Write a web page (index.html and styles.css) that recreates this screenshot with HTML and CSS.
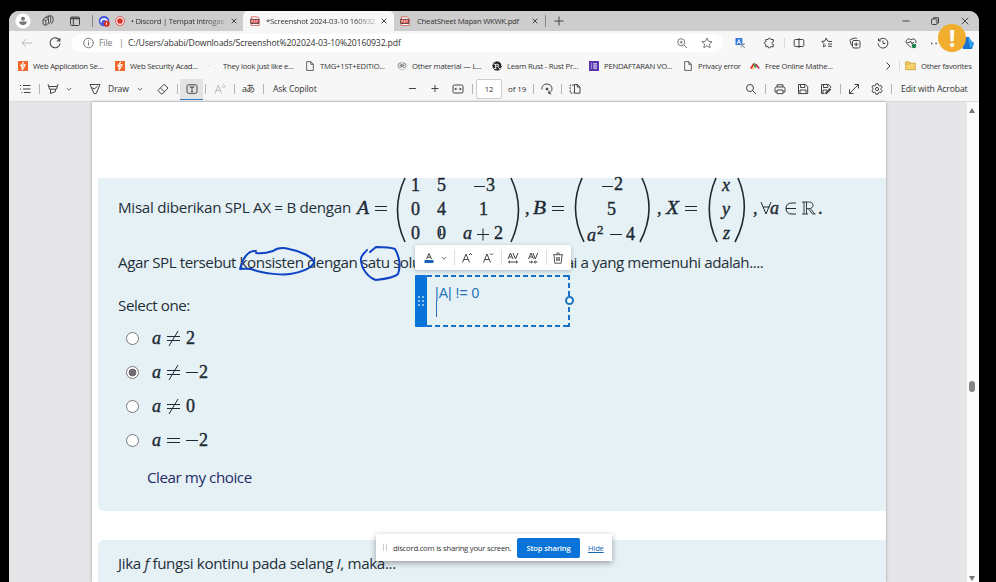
FILE: index.html
```html
<!DOCTYPE html>
<html lang="id">
<head>
<meta charset="utf-8">
<title>Screenshot 2024-03-10 160932.pdf</title>
<link rel="stylesheet" href="styles.css">
</head>
<body>
<svg class="defs">
  <symbol id="pdf" viewBox="0 0 12 12"><path d="M1.5 1h7L11 3v8.5H1.5z" fill="#fff" stroke="#d9534b"/><path d="M0.8 4h9.8v5H.8z" fill="#e03a32"/><path d="M2.2 7.8V5.3h1v1.2h-1M5 5.3v2.4h1V5.3zM8 8V5.3h1.4M8 6.5h1" fill="none" stroke="#fff" stroke-width=".7"/></symbol>
  <symbol id="chev" viewBox="0 0 6 6"><path d="M.8 2L3 4.2 5.2 2" stroke-width=".8"/></symbol>
  <symbol id="doc" viewBox="0 0 12 12"><path d="M2 .8h5l3 3v7.5H2zM7 1v3h3"/></symbol>
  <symbol id="bolt" viewBox="0 0 12 12"><path d="M0 0h12v12H0z" fill="#f2682c" stroke="none"/><path d="M7 1L3.5 5.5h2.3L4 8M6 4.5h2.5L5 11V7" stroke="#fff" stroke-width="1.3"/></symbol>
</svg>
<div class="window">
  <header class="row tabs">
    <svg class="avatar" viewBox="0 0 16 16"><circle cx="8" cy="8" r="7.6" fill="#fff" stroke="none"/><circle cx="8" cy="5.7" r="2" fill="#777" stroke="none"/><path d="M4.3 8.6h7.4c.3 2-1.2 3.6-3.7 3.6s-4-1.6-3.7-3.6z" fill="#777" stroke="none"/></svg>
    <svg viewBox="0 0 12 12"><path d="M1 4.5l3-2.500 2.500 1v5L4 10.500 1 9zM3.500 2.700L6 .8l2.700 1v5.200L6.500 8.800M6 1.800L8.500.3 11 2v5L8.800 9M1 4.500l2.800 1v5M3.800 5.500L6.500 3.200" stroke-width=".9"/></svg>
    <svg viewBox="0 0 12 12"><rect x="1.5" y="2" width="9" height="8.5" rx="1.2"/><path d="M1.5 3.3h9" stroke-width="1.8"/><path d="M4.3 3v7"/></svg>
    <i class="div"></i>
    <div class="tab t1">
      <svg viewBox="0 0 12 12"><circle cx="6" cy="6" r="5.3" fill="#4b5be0" stroke="none"/><path d="M3 7.5c0-3 1-3.500 3-3.500s3 .8 3 3" stroke="#fff" stroke-width="1.4"/><circle cx="8.7" cy="8.7" r="3" fill="#d92d20" stroke="none"/><path d="M8.5 7.5v2.4" stroke="#fff"/></svg>
      <svg class="s10" viewBox="0 0 12 12"><circle cx="6" cy="6" r="5.3" stroke="#d8392c" fill="#fff"/><circle cx="6" cy="6" r="3.4" fill="#d8392c" stroke="none"/></svg>
      <span class="title fade">• Discord | Tempat introgas</span>
      <svg class="s8" viewBox="0 0 8 8"><path d="M1.700 1.700l4.600 4.600M6.300 1.700L1.700 6.300"/></svg>
    </div>
    <div class="tab t2">
      <svg class="s10"><use href="#pdf"/></svg>
      <span class="title fade">*Screenshot 2024-03-10 160932.</span>
      <svg class="s8" viewBox="0 0 8 8"><path d="M1.700 1.700l4.600 4.600M6.300 1.700L1.700 6.300"/></svg>
    </div>
    <div class="tab t3">
      <svg class="s10"><use href="#pdf"/></svg>
      <span class="title">CheatSheet Mapan WKWK.pdf</span>
      <svg class="s8" viewBox="0 0 8 8"><path d="M1.700 1.700l4.600 4.600M6.300 1.700L1.700 6.300"/></svg>
    </div>
    <i class="div"></i>
    <svg viewBox="0 0 12 12"><path d="M6 1.5v9M1.500 6h9"/></svg>
    <svg viewBox="0 0 12 12"><path d="M2.500 6h7"/></svg>
    <svg viewBox="0 0 12 12"><rect x="2.5" y="4" width="5.5" height="5.5" rx="1"/><path d="M4.500 4V2.700h5V8H8.200"/></svg>
    <svg viewBox="0 0 12 12"><path d="M2.700 2.700l6.600 6.600M9.300 2.700L2.700 9.300"/></svg>
  </header>

  <div class="row address">
    <svg class="pale" viewBox="0 0 12 12"><path d="M11 6H1.300M5 2L1.200 6 5 10"/></svg>
    <svg viewBox="0 0 12 12"><path d="M10.500 3.500A5 5 0 1 0 11 6.500M10.800 1v3H7.700" stroke-width="1.1"/></svg>
    <div class="bar">
      <svg class="gray" viewBox="0 0 12 12"><circle cx="5.5" cy="6" r="4.8"/><path d="M5.500 5.200v3.300M5.500 3.300v1"/></svg>
      <span class="gray">File</span>
      <span class="gray">|</span>
      <span class="url">C:/Users/ababi/Downloads/Screenshot%202024-03-10%20160932.pdf</span>
      <svg class="gray" viewBox="0 0 12 12"><circle cx="5.2" cy="5.2" r="3.5"/><path d="M8 8l3 3M5.200 3.700v3M3.700 5.200h3"/></svg>
      <svg class="gray" viewBox="0 0 12 12"><path d="M6 1l1.500 3.300 3.600.4-2.700 2.400.8 3.600L6 8.900l-3.200 1.800.8-3.600L.9 4.700l3.600-.4z"/></svg>
    </div>
    <svg viewBox="0 0 12 12"><path d="M1.500 1h6.800v7H1.500z" fill="#2f77d8" stroke="none"/><path d="M3 7l2-4.500L6.700 7M3.800 5.600h2.300" stroke="#fff" stroke-width=".9"/><path d="M7 10.500l3-3.500M7.500 7.500c1 2 2 2.500 3.500 3M6.500 7h4.500" stroke="#7b8791"/></svg>
    <svg viewBox="0 0 12 12"><path d="M3.800 2.500h1.400c0-2 2.600-2 2.600 0h2.500v2.400c-2-.3-2 2.500 0 2.300v2.500H7.600c0 1.700-2.400 1.700-2.400 0H2.800V7.400C.8 7.400.8 5 2.800 5V2.500z"/></svg>
    <i class="div soft"></i>
    <svg viewBox="0 0 12 12"><rect x="1.2" y="2.5" width="9.6" height="7" rx="1.2"/><path d="M6 1v10"/></svg>
    <svg viewBox="0 0 12 12"><path d="M8 4.200l-1.400-.2L5.200 1 3.800 4l-3 .4 2.200 2.200-.6 3.300L5 8.400M7.800 4.500H11M7 7h4M7 9.300h4"/></svg>
    <svg viewBox="0 0 12 12"><rect x="3.5" y="3.5" width="7.5" height="7.5" rx="1.5"/><path d="M2.500 8.500L1 3.500q0-1 1-1.300l4.500-1.200q1 0 1.300 1M7.200 5.300v4M5.200 7.300h4"/></svg>
    <svg viewBox="0 0 12 12"><path d="M1.500 1.500V4H4M1.600 4A4.900 4.900 0 1 1 1.100 6.500M6 3.500v3h2.500"/></svg>
    <svg viewBox="0 0 12 12"><path d="M6 10.500L1.500 6C-.3 3.500 3.500.2 6 3c2.500-2.800 6.200.5 4.600 3M2.500 5.500h2l1-1.500 1.500 3 1-1.500h1"/><circle cx="9" cy="9" r="2.3" fill="#16824d" stroke="none"/></svg>
    <svg viewBox="0 0 12 12"><path d="M-1 6.500h1.300M3.500 6.500h1.300M8 6.500h1.300" stroke-width="1.400"/></svg>
    <svg class="copilot" viewBox="0 0 14 14"><path d="M5 1h4l2 4 3 2-2 6H3L1 8z" fill="#1673d2" stroke="none"/><path d="M8 2l4 3 1 5-3 2z" fill="#31a6ee" stroke="none"/></svg>
  </div>

  <div class="row bookmarks">
    <a><svg class="s10"><use href="#bolt"/></svg><span>Web Application Se...</span></a>
    <a><svg class="s10"><use href="#bolt"/></svg><span>Web Security Acad...</span></a>
    <a><svg class="s10" viewBox="0 0 12 12"><path d="M1 6h2M6 2l1 1M8 8l1 1" stroke="#cfd3f2"/></svg><span>They look just like e...</span></a>
    <a><svg class="s10"><use href="#doc"/></svg><span>TMG+1ST+EDITIO...</span></a>
    <a><svg class="s10" viewBox="0 0 12 12"><circle cx="3.5" cy="5.500" r="2.300" stroke="#777"/><circle cx="8.5" cy="5.500" r="2.300" stroke="#777"/><circle cx="4" cy="5.500" r=".4"/><circle cx="8" cy="5.500" r=".4"/><path d="M1 8q5 5 10 0M1 3.500q5-4 10 0" stroke="#aaa" stroke-width=".8"/></svg><span>Other material — L...</span></a>
    <a><svg class="s10" viewBox="0 0 12 12"><circle cx="6" cy="6" r="5" fill="#222" stroke="#222" stroke-dasharray="1 .7" stroke-width="1.5"/><path d="M2 4h5.500q1.500 1 0 2.300H4M4.300 4v5M2 9h3.500M7 6.300L8.500 9H10" stroke="#fff"/></svg><span>Learn Rust - Rust Pr...</span></a>
    <a><svg class="s10" viewBox="0 0 12 12"><path d="M0 0h12v12H0z" fill="#5b35b0" stroke="none"/><path d="M2.500 3.500h1M5 3.500h4.500M2.500 6h1M5 6h4.500M2.500 8.500h1M5 8.500h4.500" stroke="#fff" stroke-width="1.200"/></svg><span>PENDAFTARAN VO...</span></a>
    <a><svg class="s10"><use href="#doc"/></svg><span>Privacy error</span></a>
    <a><svg class="s10" viewBox="0 0 12 12"><path d="M1 9l4-6" stroke="#e5322d" stroke-width="2.500"/><path d="M5 3l2 5" stroke="#3b9b45" stroke-width="2.500"/><path d="M7 4l4 5" stroke="#c62d4c" stroke-width="2"/><path d="M3 9h2" stroke="#f2b632" stroke-width="2"/></svg><span>Free Online Mathe...</span></a>
    <svg class="s8" viewBox="0 0 8 8"><path d="M2.500.5L6 4 2.500 7.500"/></svg>
    <i class="div soft"></i>
    <a><svg class="s11" viewBox="0 0 12 12"><path d="M.7 2h4l1.200 1.500h5.400v7H.7z" fill="#f7d36b" stroke="#c39a2b" stroke-width=".8"/><path d="M1 4.500h4l1-1" stroke="#c39a2b" stroke-width=".7"/></svg><span>Other favorites</span></a>
  </div>

  <div class="row pdfbar">
    <svg viewBox="0 0 12 12"><path d="M1 2.500h1M4 2.500h7.500M1 6h1M4 6h7.500M2.500 9.500h1M5 9.500h6.500"/></svg>
    <i class="div"></i>
    <svg viewBox="0 0 12 12"><path d="M1 1.200l1.500 5h7l1.500-5M2 3.500h8M3.500 6.200v4.300l5-2V6.200"/></svg>
    <svg class="s6"><use href="#chev"/></svg>
    <svg viewBox="0 0 12 12"><path d="M1 1.500h10L7.200 10.500H5zM2.500 4.500L5.500 6l3-3"/></svg>
    <span>Draw</span>
    <svg class="s6"><use href="#chev"/></svg>
    <svg viewBox="0 0 12 12"><path d="M1 7.500L7 1.300l4 3.700-5.500 5.800H4zM3.500 5l4 3.800"/></svg>
    <i class="div"></i>
    <div class="active"><svg viewBox="0 0 12 12"><rect x="1" y="1.8" width="10" height="8.5" rx="1.5"/><path d="M4 4.500V4h4v.5M6 4v4.500M5.200 8.500h1.600"/></svg></div>
    <i class="div"></i>
    <svg class="pale" viewBox="0 0 12 12"><path d="M1 10.500l3.300-8.500L7.600 10.500M2.200 7.500h4.200M8.300 2.800l1 2M9 1q1.800 1.300 2 3.500"/></svg>
    <i class="div"></i>
    <span class="aa">aあ</span>
    <i class="div"></i>
    <span>Ask Copilot</span>
    <svg viewBox="0 0 12 12"><path d="M3 5.500h7"/></svg>
    <svg viewBox="0 0 12 12"><path d="M6 2v7M2.500 5.500h7"/></svg>
    <svg viewBox="0 0 12 12"><rect x="1" y="2" width="10" height="8" rx="1.2"/><path d="M2.800 6h2.400M6.800 6h2.400M4 4.800L2.800 6 4 7.200M8 4.800L9.200 6 8 7.200" stroke-width=".9"/></svg>
    <i class="div"></i>
    <span class="pagebox">12</span>
    <span class="of">of 19</span>
    <i class="div"></i>
    <svg viewBox="0 0 12 12"><path d="M1 6.500C.3 3 3 1 6 1s5.300 2.500 5 5.200C10.900 8 9.700 9.300 8 10M8.200 7.500L7.500 10.200l2.700.8"/><circle cx="6" cy="6" r="1" fill="#444"/></svg>
    <i class="div"></i>
    <svg viewBox="0 0 12 12"><path d="M5 2H1.200v8H5" stroke-dasharray="2 1"/><path d="M5.500 1.500h3L11 4v6.200H5.500zM8.200 1.500V4H11"/></svg>
    <svg viewBox="0 0 12 12"><circle cx="5" cy="5" r="3.5"/><path d="M7.500 7.500L11 11"/></svg>
    <i class="div"></i>
    <svg viewBox="0 0 12 12"><path d="M3 4V1.800h6V4M3 9H1V5.500Q1 4 2.500 4h7Q11 4 11 5.500V9H9M3 7h6v3.700H3z"/></svg>
    <svg viewBox="0 0 12 12"><path d="M1.500 1.500h7L10.700 3.600v7H1.500zM3.500 1.500v3h4.300v-3M3 10.500V7h6v3.500"/></svg>
    <svg viewBox="0 0 12 12"><path d="M10.700 5V3.600L8.500 1.500h-7v9h3M3.500 1.500v3h4.300v-3M3 10.500V7h4"/><path d="M5.500 10.800L10.500 5.700" stroke-width="2.200"/></svg>
    <i class="div"></i>
    <svg viewBox="0 0 12 12"><path d="M1.500 10.500l9-9M6.500 1.500h4v4M1.500 6.500v4h4"/></svg>
    <svg viewBox="0 0 12 12"><path d="M4.900.8h2.200l.4 1.500 1 .6 1.500-.5 1.100 1.900-1.100 1.100v1.200l1.100 1.100-1.100 1.900-1.500-.5-1 .6-.4 1.500H4.900l-.4-1.500-1-.6-1.500.5L.9 7.700 2 6.600V5.400L.9 4.300 2 2.400l1.500.5 1-.6z"/><circle cx="6" cy="6" r="1.600"/></svg>
    <i class="div"></i>
    <span>Edit with Acrobat</span>
  </div>

  <main class="viewer">
    <div class="page">
      <div class="blank"></div>
      <section class="card">
        <div class="formula-line">
          <span class="lead">Misal diberikan SPL AX = B dengan</span>
          <svg class="math" viewBox="355 178 470 66" width="470" height="66">
            <g class="big"><text x="357" y="214" class="v" textLength="12" lengthAdjust="spacingAndGlyphs">A</text><text x="533" y="214" class="v" textLength="13" lengthAdjust="spacingAndGlyphs">B</text><text x="666" y="214" class="v" textLength="13" lengthAdjust="spacingAndGlyphs">X</text>
            <text x="525" y="214">,</text><text x="657" y="214">,</text><text x="753" y="214">,</text>
            <text x="770" y="214" class="v">a</text><text x="818" y="214">.</text></g>
            <path d="M375 206.500h12M375 210.500h12M552 206.500h12M552 210.500h12M685 206.500h12M685 210.500h12M474 186.500h11M602 186.500h11M610 234.500h12"/>
            <path d="M477 234.500h12M483 228.500v12"/>
            <path d="M761 202l5 12L771 202M763 207h6.500"/>
            <path d="M796 203h-4q-6 0-6 5.500t6 5.500h4M786 208.500h10"/>
            <path d="M802 214h6M804 202v12M806.500 202v12M802 202h6.500q4.500 0 4.500 3.300t-4.500 3.300h-2M808.500 209l4 5h3M810.500 208.600l4 5.400" stroke-width=".9"/>
            <path class="paren" d="M405 178Q390 210 405 242M511 178Q526 210 511 242M582 178Q568 210 584 242M642 178Q657 210 640 242M716 178Q702 210 717 242M738 178Q752 210 735 242"/>
            <g class="big">
              <text x="411" y="191">1</text><text x="437" y="191">5</text><text x="486" y="191">3</text>
              <text x="411" y="215">0</text><text x="437" y="215">4</text><text x="479" y="215">1</text>
              <text x="411" y="239">0</text><text x="437" y="239">0</text><text x="463" y="239" class="v">a</text><text x="494" y="239">2</text>
              <text x="614" y="190">2</text><text x="607" y="215">5</text><text x="587" y="241" class="v">a</text><text x="597" y="234" class="sup">2</text><text x="626" y="240">4</text>
              <text x="722" y="191" class="v">x</text><text x="722" y="215" class="v">y</text><text x="723" y="239" class="v">z</text>
            </g>
            <path d="M440.500 229v6.500l2-1.500 2 2" stroke-width=".9"/>
          </svg>
        </div>
        <p class="question"><span class="qa">Agar SPL tersebut konsisten dengan satu solusi,</span><span class="qb">nilai a yang memenuhi adalah....</span></p>
        <p class="select">Select one:</p>
        <label class="opt"><i class="radio"></i><svg class="math" viewBox="0 0 60 20" width="60" height="20"><g class="big"><text x="0" y="16" class="v">a</text><text x="34" y="16">2</text></g><path d="M15 8.500h13M15 12.500h13M26 3L17 18"/></svg></label>
        <label class="opt"><i class="radio on"></i><svg class="math" viewBox="0 0 60 20" width="60" height="20"><g class="big"><text x="0" y="16" class="v">a</text><text x="47" y="16">2</text></g><path d="M15 8.500h13M15 12.500h13M26 3L17 18M34 10.500h12"/></svg></label>
        <label class="opt"><i class="radio"></i><svg class="math" viewBox="0 0 60 20" width="60" height="20"><g class="big"><text x="0" y="16" class="v">a</text><text x="34" y="16">0</text></g><path d="M15 8.500h13M15 12.500h13M26 3L17 18"/></svg></label>
        <label class="opt"><i class="radio"></i><svg class="math" viewBox="0 0 60 20" width="60" height="20"><g class="big"><text x="0" y="16" class="v">a</text><text x="47" y="16">2</text></g><path d="M15 8.500h13M15 12.500h13M34 10.500h12"/></svg></label>
        <a class="clear">Clear my choice</a>
      </section>
      <section class="card next"><p>Jika <em>f</em> fungsi kontinu pada selang <em>I</em>, maka...</p></section>
    </div>
    <div class="scroll"><i class="up"></i><i class="thumb"></i><i class="down"></i></div>
  </main>
</div>

<svg class="ink" viewBox="235 240 170 44"><path d="M256 251C248 250 243 258 240 269C246 269 250 268 254 270C264 274 284 275 290 274C302 272 311 268 314 263C314 257 300 251 289 249C282 247 277 248 273 251C267 253 262 254 256 253"/><path d="M367 250C364 254 360 255 361 261C362 270 369 278 376 280C385 279 395 277 398 274C401 266 400 258 395 249C390 247 382 247 376 247L370 252"/></svg>

<div class="textbox"><div class="handle"><svg viewBox="0 0 8 12"><path d="M1.300 2h1.400M5.300 2h1.400M1.300 6h1.400M5.300 6h1.400M1.300 10h1.400M5.300 10h1.400" stroke="#fff" stroke-width="1.400"/></svg></div><div class="field"><span>|A| != 0</span><i class="caret"></i></div><i class="knob"></i></div>

<div class="floatbar">
  <svg viewBox="0 0 12 12"><path d="M3.500 7L6 1.500 8.500 7M4.400 5.200h3.200"/><path d="M1.500 9.500h9" stroke="#1666b5" stroke-width="3"/></svg>
  <svg class="s6"><use href="#chev"/></svg>
  <i class="div"></i>
  <svg viewBox="0 0 12 12"><path d="M1.500 10.500L5 2l3.500 8.500M2.700 7.500h4.600M8 3l1.500-1.500L11 3"/></svg>
  <svg viewBox="0 0 12 12"><path d="M1.500 10.500L5 2l3.500 8.500M2.700 7.500h4.600M8 1.500L9.500 3 11 1.500"/></svg>
  <i class="div"></i>
  <svg viewBox="0 0 12 12"><path d="M1 7l2.500-6L6 7M2 5h3M6 1l2.500 6L11 1M1.500 10h9M3 8.700L1.500 10 3 11.300M9 8.700l1.500 1.300L9 11.300"/></svg>
  <svg viewBox="0 0 12 12"><path d="M1.500 7L4 1l2.500 6M2.500 5h3M6 1l2.300 6L10.700 1M2 10h3.500M7 10h3.500M4 8.700L5.500 10 4 11.300M8.500 8.700L7 10l1.500 1.300"/></svg>
  <i class="div"></i>
  <svg viewBox="0 0 12 12"><path d="M1 2.700h10M4.500 2.500q0-1.700 1.500-1.700t1.500 1.700M2 3l.8 8.200h6.400L10 3M4.700 5v4M6 5v4M7.300 5v4" stroke-width=".9"/></svg>
</div>

<div class="share"><i class="grip"></i><span class="msg">discord.com is sharing your screen.</span><button>Stop sharing</button><a>Hide</a></div>
<div class="warn">!</div>
</body>
</html>
```
FILE: styles.css
```css
* { box-sizing: border-box; }
body { margin: 0; width: 996px; height: 582px; overflow: hidden; background: #000; font-family: "Open Sans", "Noto Sans", "Noto Sans CJK JP", sans-serif; font-size: 7.7px; letter-spacing: -0.23px; color: #333; }
p { margin: 0; }
svg { display: block; width: 12px; height: 12px; fill: none; stroke: #444; stroke-width: 1; overflow: visible; }
.defs { position: absolute; width: 0; height: 0; }
.s6 { width: 6px; height: 6px; }
.s8 { width: 8px; height: 8px; }
.s10 { width: 10px; height: 10px; flex: none; }
.s11 { width: 11px; height: 11px; flex: none; }
.pale { stroke: #bbb; }
.gray { color: #777; stroke: #777; }
span.gray { stroke: none; }
.div { width: 1px; height: 10px; background: #b4b4b4; }
.div.soft { background: #dadada; }

.window { margin: 11px 0 0 9px; width: 970px; height: 571px; background: #f7f7f7; border-radius: 10px 10px 0 0; overflow: hidden; }
.row { display: grid; align-items: center; white-space: nowrap; }
.row > span { line-height: 12px; }

.tabs { height: 20px; padding-left: 6px; background: #cdcdcd; grid-template-columns: 27px 27px 23px 6px 145px 151px 151px 8px 347px 29px 30px auto; }
.avatar { width: 16px; height: 16px; }
.tabs > .div { background: #888; height: 12px; }
.tab { display: grid; align-items: center; height: 20px; }
.t1 { grid-template-columns: 17px 16px 99px auto; }
.t2 { padding-left: 7px; background: #f7f7f7; border-radius: 5px 5px 0 0; grid-template-columns: 16px 114px auto; }
.t3 { padding-left: 6px; grid-template-columns: 17px 114px auto; }
.title { line-height: 12px; }
.fade { -webkit-mask-image: linear-gradient(90deg, #000 80%, rgba(0,0,0,.25)); mask-image: linear-gradient(90deg, #000 80%, rgba(0,0,0,.25)); }
.t1 .fade { width: 94px; }
.t2 .title { letter-spacing: -0.2px; }
.t2 .fade { width: 110px; }

.address { height: 24px; padding-left: 12px; grid-template-columns: 28px 23px 662px 29px 21px 9px 28px 28px 28px 28px 27px 28px auto; }
.bar { display: grid; align-items: center; width: 651px; height: 18px; padding-left: 11px; border-radius: 9px; background: #fff; grid-template-columns: 16px 20px 9px 548px 25px auto; font-size: 8.7px; letter-spacing: -0.15px; }
.copilot { width: 14px; height: 14px; }

.bookmarks { height: 21px; padding-left: 9px; grid-template-columns: 97px 93px 97px 92px 95px 97px 94px 67px 134px 15px 6px auto; }
.bookmarks a { display: flex; align-items: center; gap: 5px; }
.bookmarks a > span { line-height: 12px; }

.pdfbar { height: 26px; padding: 1px 0 0 10px; border-bottom: 1px solid #ddd; font-size: 8.6px; letter-spacing: -0.1px; grid-template-columns: 20px 8px 19px 23px 19px 29px 20px 20px 3px 25px 9px 20px 8px 21px 10px 133px 23px 23px 20px 4px 32px 25px 8px 20px 8px 176px 20px 9px 23px 23px 20px 8px 23px 20px 10px auto; }
.active { display: flex; align-items: center; justify-content: center; width: 23px; height: 21px; background: #e2e3e5; border-bottom: 1.5px solid #2878bd; }
.row > .aa { font-size: 9px; letter-spacing: -1px; }
.row > .pagebox { width: 26px; height: 20px; border: 1px solid #ccc; border-radius: 2px; background: #fff; text-align: center; line-height: 18px; font-size: 7.6px; }
.of { font-size: 8px; }

.viewer { display: flex; justify-content: space-between; height: 480px; padding-left: 83px; background: #e6e5e7; }
.page { width: 794px; height: 480px; background: #fff; box-shadow: 0 0 3px #999; }
.blank { height: 76px; }
.card { display: flex; flex-direction: column; height: 333px; margin-left: 6px; padding-left: 20px; background: #e6f1f6; border-radius: 0 0 0 6px; color: #1f2f38; font-size: 15.2px; letter-spacing: -0.45px; white-space: nowrap; }
.formula-line { display: flex; height: 66px; align-items: center; }
.lead { width: 237px; line-height: 24px; padding-bottom: 8px; letter-spacing: -0.3px; }
.math { width: auto; height: auto; stroke: #1c2b33; stroke-width: 1; flex: none; }
.big { font: 18px "Liberation Serif", serif; letter-spacing: 0; fill: #1c2b33; stroke-width: .4; }
.v { font-style: italic; }
.sup { font-size: 13px; }
.paren { stroke-width: 1.6; }
.question { display: flex; height: 38px; line-height: 37px; }
.qa { width: 432px; }
.select { height: 39px; line-height: 47px; }
.opt { display: flex; align-items: center; height: 34px; padding-left: 8px; gap: 13px; }
.radio { width: 13px; height: 13px; border: 1px solid #777; border-radius: 50%; background: #fff; }
.radio.on { background: radial-gradient(circle, #6f6b70 0 3.6px, #fff 4.2px); }
.clear { padding-left: 29px; line-height: 40px; color: #1e2c66; }
.card.next { height: 60px; margin-top: 29px; border-radius: 6px 0 0 0; letter-spacing: -0.37px; }
.next p { line-height: 46px; }
.scroll { display: flex; flex-direction: column; align-items: center; width: 12px; padding: 6px 3px 0 0; background: #fcfcfc; }
.up { border: 3.5px solid transparent; border-top: 0; border-bottom: 5px solid #777; }
.thumb { width: 6px; height: 11px; margin-top: 268px; border-radius: 3px; background: #858585; }
.down { margin-top: 184px; border: 3.5px solid transparent; border-bottom: 0; border-top: 5px solid #777; }

.ink { position: absolute; left: 235px; top: 240px; width: 170px; height: 44px; stroke: #0e43c4; stroke-width: 2; stroke-linecap: round; stroke-linejoin: round; }
.floatbar { position: absolute; left: 415px; top: 245px; width: 156px; height: 25px; padding-left: 8px; display: grid; align-items: center; grid-template-columns: 18px 13px 7px 21px 19px 6px 20px 19px 6px auto; background: #fff; border-radius: 2px; box-shadow: 0 1px 4px rgba(0,0,0,.25); }
.floatbar .div { background: #ddd; height: 15px; }
.textbox { position: absolute; left: 415px; top: 275px; width: 155px; height: 52px; display: flex; }
.handle { display: flex; align-items: center; justify-content: center; width: 12px; background: #0873d8; border-radius: 1px; }
.handle svg { width: 8px; height: 12px; }
.field { flex: 1; padding: 10px 0 0 8px; color: #2672ba; font: 14px/16px "Liberation Sans", sans-serif; letter-spacing: 0; background: repeating-linear-gradient(90deg, #1873c4 0 5px, transparent 5px 8px) 0 0/100% 2px no-repeat, repeating-linear-gradient(90deg, #1873c4 0 5px, transparent 5px 8px) 0 100%/100% 2px no-repeat, repeating-linear-gradient(#1873c4 0 5px, transparent 5px 8px) 100% 0/2px 100% no-repeat; }
.caret { display: block; width: 1px; height: 16px; margin-left: 1px; background: #2672ba; }
.knob { position: absolute; right: -4px; top: 21px; width: 9px; height: 9px; border: 2px solid #1873c4; border-radius: 50%; background: #fff; }
.share { position: absolute; left: 376px; top: 534px; width: 236px; height: 27px; display: grid; align-items: center; grid-template-columns: 10px 124px 71px auto; padding-left: 7px; background: #fff; box-shadow: 0 2px 6px rgba(0,0,0,.35); white-space: nowrap; }
.grip { width: 4px; height: 7px; border: solid #ccc; border-width: 0 1px; }
.share button { width: 63px; height: 20px; padding: 0; border: 0; border-radius: 2px; background: #0873d8; color: #fff; font: 600 7.6px "Open Sans", sans-serif; letter-spacing: -0.15px; }
.share a { color: #1668b8; text-decoration: underline; }
.warn { position: absolute; left: 938px; top: 24px; width: 28px; height: 28px; border-radius: 50%; background: #f1ad2e; color: #fff; font: 700 24px/27px "Open Sans", sans-serif; text-align: center; }
```
